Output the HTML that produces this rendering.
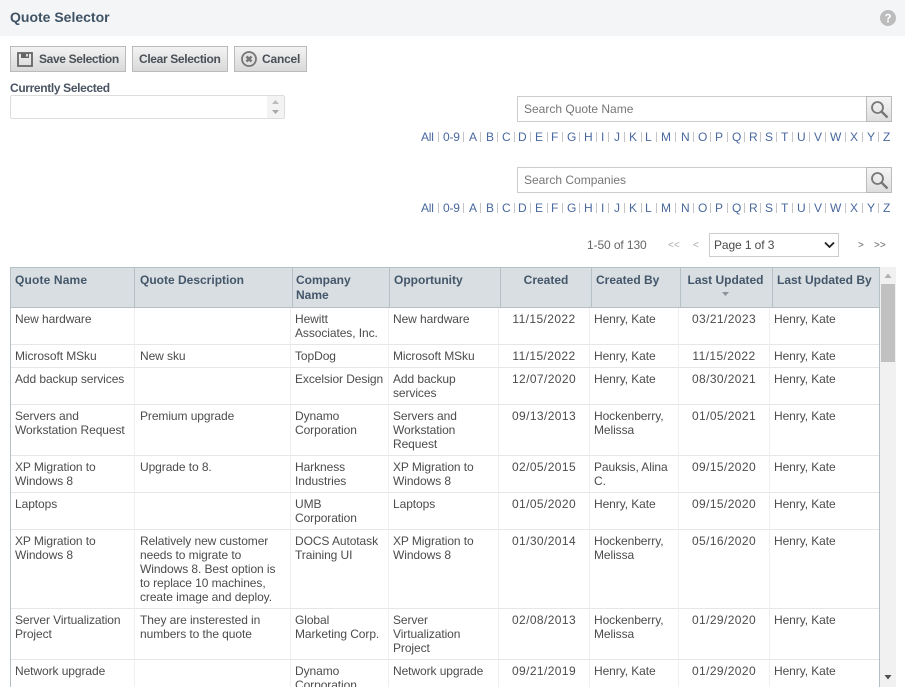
<!DOCTYPE html>
<html><head><meta charset="utf-8"><title>Quote Selector</title>
<style>
html,body{margin:0;padding:0;background:#fff}
body{width:905px;height:697px;overflow:hidden;position:relative;font-family:"Liberation Sans",sans-serif;font-size:12px;color:#4a4a4a}
.abs{position:absolute}
.btn{position:absolute;top:46px;height:24px;border:1px solid #bbb;background:linear-gradient(#f3f3f3,#d9d9d9);font-weight:bold;color:#4a5058;line-height:25px;white-space:nowrap;letter-spacing:-.35px}
.search{position:absolute;left:517px;width:349px;height:24px;border:1px solid #ccc;line-height:24px;color:#777;text-indent:6px;background:#fff}
.sbtn{position:absolute;left:866px;width:24px;height:24px;border:1px solid #bbb;background:linear-gradient(#f6f6f6,#dedede)}
.alpha{position:absolute;left:0;width:905px;height:14px}
.alpha a{position:absolute;top:0;color:#48689e;line-height:14px;letter-spacing:-.2px}
.alpha i{position:absolute;top:2px;width:1px;height:10px;background:#c4c4c4}
table{border-collapse:separate;border-spacing:0;table-layout:fixed;position:absolute;left:0;top:0}
td,th{padding:0;vertical-align:top;white-space:nowrap;text-align:left;overflow:hidden}
#wrap{position:absolute;left:10px;top:267px;width:868px;height:420px;overflow:hidden;border-left:1px solid #b5c0c5;border-right:1px solid #b5c0c5}
#head{width:868px;height:41px;background:#d8dee1;border-top:1px solid #b5c0c5;border-bottom:1px solid #b5c0c5;box-sizing:border-box}
#head th{height:39px;padding-top:5px;box-sizing:border-box;font-size:12px;line-height:15px;color:#44566a;border-right:1px solid #b5c0c5;font-weight:bold}
#head th:last-child{border-right:0}
#body{top:41px;width:868px}
#body td{box-sizing:border-box;padding-top:4px;line-height:14px;color:#4c4c4c;border-right:1px solid #efefef;border-bottom:1px solid #e4e6e7;letter-spacing:-.08px}
#body td:last-child{border-right:0}
.c{text-align:center!important}
#body td.c{letter-spacing:.4px}
</style></head><body>

<div class="abs" style="left:0;top:0;width:905px;height:36px;background:#f4f5f7"></div>
<div class="abs" style="left:10px;top:8px;font-size:14px;font-weight:bold;color:#3f5365;line-height:18px">Quote Selector</div>
<svg class="abs" style="left:880px;top:10px" width="16" height="16" viewBox="0 0 16 16"><circle cx="8" cy="8" r="8" fill="#bcbcbc"/><path d="M5.200 6.200C5.300 4.600 6.500 3.700 8 3.700c1.700 0 2.900 1 2.900 2.400 0 1.200-.7 1.700-1.500 2.300-.5.4-.7.7-.7 1.300H7.200c0-1.100.3-1.600 1-2.200.6-.5 1-.8 1-1.400 0-.6-.5-1-1.200-1-.7 0-1.200.4-1.300 1.100z" fill="#fff"/><rect x="7.100" y="10.500" width="1.800" height="1.800" fill="#fff"/></svg>

<div class="btn" style="left:10px;width:114px"><svg class="abs" style="left:6px;top:5px" width="16" height="15" viewBox="0 0 16 15"><path d="M1 1h14v13H1z" fill="none" stroke="#666" stroke-width="1.800"/><rect x="4" y="1" width="8" height="5" fill="#666"/><rect x="9" y="2" width="2" height="2.500" fill="#ddd"/></svg><span style="position:absolute;left:28px">Save Selection</span></div>
<div class="btn" style="left:132px;width:94px"><span style="position:absolute;left:6px">Clear Selection</span></div>
<div class="btn" style="left:234px;width:71px"><svg class="abs" style="left:6px;top:4px" width="16" height="16" viewBox="0 0 16 16"><circle cx="8" cy="8" r="7" fill="#e2e2e2" stroke="#777" stroke-width="1.800"/><path d="M5.500 5.500l5 5M10.500 5.500l-5 5" stroke="#777" stroke-width="2.600"/></svg><span style="position:absolute;left:27px;letter-spacing:-.2px">Cancel</span></div>

<div class="abs" style="left:10px;top:81px;font-weight:bold;color:#4a5462;line-height:15px;letter-spacing:-.35px">Currently Selected</div>
<div class="abs" style="left:10px;top:95px;width:273px;height:22px;border:1px solid #ddd;border-radius:2px;background:#fff"></div>
<div class="abs" style="left:267px;top:96px;width:17px;height:22px;background:#f3f3f3"></div>
<svg class="abs" style="left:272px;top:100px" width="7" height="15"><path d="M3.500 0L7 4H0z" fill="#bcbcbc"/><path d="M0 10h7l-3.500 4z" fill="#a8a8a8"/></svg>

<div class="search" style="top:96px">Search Quote Name</div>
<div class="sbtn" style="top:96px"><svg class="abs" style="left:3px;top:3px" width="19" height="19" viewBox="0 0 19 19"><circle cx="7.500" cy="7.500" r="5.500" fill="none" stroke="#777" stroke-width="1.800"/><path d="M11.500 11.500l6 6" stroke="#777" stroke-width="2.400"/></svg></div>

<div class="alpha" style="top:130px">
<a style="left:421px">All</a><i style="left:438px"></i><a style="left:443px">0-9</a><i style="left:463px"></i><a style="left:469px">A</a><i style="left:480px"></i><a style="left:486px">B</a><i style="left:497px"></i><a style="left:502px">C</a><i style="left:514px"></i><a style="left:518px">D</a><i style="left:530px"></i><a style="left:535px">E</a><i style="left:547px"></i><a style="left:551px">F</a><i style="left:562px"></i><a style="left:567px">G</a><i style="left:579px"></i><a style="left:584px">H</a><i style="left:596px"></i><a style="left:601px">I</a><i style="left:608px"></i><a style="left:614px">J</a><i style="left:624px"></i><a style="left:629px">K</a><i style="left:641px"></i><a style="left:645px">L</a><i style="left:656px"></i><a style="left:661px">M</a><i style="left:675px"></i><a style="left:681px">N</a><i style="left:693px"></i><a style="left:698px">O</a><i style="left:710px"></i><a style="left:715px">P</a><i style="left:727px"></i><a style="left:732px">Q</a><i style="left:744px"></i><a style="left:749px">R</a><i style="left:760px"></i><a style="left:765px">S</a><i style="left:776px"></i><a style="left:781px">T</a><i style="left:792px"></i><a style="left:797px">U</a><i style="left:809px"></i><a style="left:814px">V</a><i style="left:825px"></i><a style="left:830px">W</a><i style="left:845px"></i><a style="left:850px">X</a><i style="left:862px"></i><a style="left:867px">Y</a><i style="left:878px"></i><a style="left:883px">Z</a>
</div>

<div class="search" style="top:167px">Search Companies</div>
<div class="sbtn" style="top:167px"><svg class="abs" style="left:3px;top:3px" width="19" height="19" viewBox="0 0 19 19"><circle cx="7.500" cy="7.500" r="5.500" fill="none" stroke="#777" stroke-width="1.800"/><path d="M11.500 11.500l6 6" stroke="#777" stroke-width="2.400"/></svg></div>

<div class="alpha" style="top:201px">
<a style="left:421px">All</a><i style="left:438px"></i><a style="left:443px">0-9</a><i style="left:463px"></i><a style="left:469px">A</a><i style="left:480px"></i><a style="left:486px">B</a><i style="left:497px"></i><a style="left:502px">C</a><i style="left:514px"></i><a style="left:518px">D</a><i style="left:530px"></i><a style="left:535px">E</a><i style="left:547px"></i><a style="left:551px">F</a><i style="left:562px"></i><a style="left:567px">G</a><i style="left:579px"></i><a style="left:584px">H</a><i style="left:596px"></i><a style="left:601px">I</a><i style="left:608px"></i><a style="left:614px">J</a><i style="left:624px"></i><a style="left:629px">K</a><i style="left:641px"></i><a style="left:645px">L</a><i style="left:656px"></i><a style="left:661px">M</a><i style="left:675px"></i><a style="left:681px">N</a><i style="left:693px"></i><a style="left:698px">O</a><i style="left:710px"></i><a style="left:715px">P</a><i style="left:727px"></i><a style="left:732px">Q</a><i style="left:744px"></i><a style="left:749px">R</a><i style="left:760px"></i><a style="left:765px">S</a><i style="left:776px"></i><a style="left:781px">T</a><i style="left:792px"></i><a style="left:797px">U</a><i style="left:809px"></i><a style="left:814px">V</a><i style="left:825px"></i><a style="left:830px">W</a><i style="left:845px"></i><a style="left:850px">X</a><i style="left:862px"></i><a style="left:867px">Y</a><i style="left:878px"></i><a style="left:883px">Z</a>
</div>

<div class="abs" style="left:587px;top:238px;line-height:15px;color:#666;letter-spacing:-.1px">1-50 of 130</div>
<div class="abs" style="left:668px;top:238px;line-height:15px;color:#aaa;font-size:10px">&lt;&lt;</div>
<div class="abs" style="left:693px;top:238px;line-height:15px;color:#aaa;font-size:10px">&lt;</div>
<div class="abs" style="left:709px;top:233px;width:128px;height:22px;border:1px solid #ccc;background:#fff;line-height:23px;text-indent:4px;color:#4a4a4a;letter-spacing:-.1px">Page 1 of 3</div>
<svg class="abs" style="left:824px;top:241px" width="11" height="8"><path d="M1 1.500l4.500 4.500L10 1.500" fill="none" stroke="#222" stroke-width="1.800"/></svg>
<div class="abs" style="left:858px;top:238px;line-height:15px;color:#666;font-size:10px">&gt;</div>
<div class="abs" style="left:874px;top:238px;line-height:15px;color:#666;font-size:10px">&gt;&gt;</div>

<div id="wrap">
<table id="head"><colgroup><col style="width:124px"><col style="width:158px"><col style="width:97px"><col style="width:111px"><col style="width:91px"><col style="width:89px"><col style="width:92px"><col style="width:106px"></colgroup>
<tr>
<th style="padding-left:4px;letter-spacing:.15px">Quote Name</th>
<th style="padding-left:5px">Quote Description</th>
<th style="padding-left:3px">Company<br>Name</th>
<th style="padding-left:4px">Opportunity</th>
<th class="c">Created</th>
<th style="padding-left:4px">Created By</th>
<th class="c" style="padding-right:2px">Last Updated</th>
<th style="padding-left:4px">Last Updated By</th>
</tr></table>
<svg class="abs" style="left:711px;top:25px" width="8" height="5"><path d="M0 0h7L3.500 4z" fill="#8a9298"/></svg>

<table id="body"><colgroup><col style="width:124px"><col style="width:156px"><col style="width:98px"><col style="width:110px"><col style="width:91px"><col style="width:89px"><col style="width:91px"><col style="width:109px"></colgroup>
<tr style="height:37px"><td style="padding-left:4px">New hardware</td><td style="padding-left:5px"></td><td style="padding-left:4px">Hewitt<br>Associates, Inc.</td><td style="padding-left:4px">New hardware</td><td class="c">11/15/2022</td><td style="padding-left:4px">Henry, Kate</td><td class="c">03/21/2023</td><td style="padding-left:4px">Henry, Kate</td></tr>
<tr style="height:23px"><td style="padding-left:4px">Microsoft MSku</td><td style="padding-left:5px">New sku</td><td style="padding-left:4px">TopDog</td><td style="padding-left:4px">Microsoft MSku</td><td class="c">11/15/2022</td><td style="padding-left:4px">Henry, Kate</td><td class="c">11/15/2022</td><td style="padding-left:4px">Henry, Kate</td></tr>
<tr style="height:37px"><td style="padding-left:4px">Add backup services</td><td style="padding-left:5px"></td><td style="padding-left:4px">Excelsior Design</td><td style="padding-left:4px">Add backup<br>services</td><td class="c">12/07/2020</td><td style="padding-left:4px">Henry, Kate</td><td class="c">08/30/2021</td><td style="padding-left:4px">Henry, Kate</td></tr>
<tr style="height:51px"><td style="padding-left:4px">Servers and<br>Workstation Request</td><td style="padding-left:5px">Premium upgrade</td><td style="padding-left:4px">Dynamo<br>Corporation</td><td style="padding-left:4px">Servers and<br>Workstation<br>Request</td><td class="c">09/13/2013</td><td style="padding-left:4px">Hockenberry,<br>Melissa</td><td class="c">01/05/2021</td><td style="padding-left:4px">Henry, Kate</td></tr>
<tr style="height:37px"><td style="padding-left:4px">XP Migration to<br>Windows 8</td><td style="padding-left:5px">Upgrade to 8.</td><td style="padding-left:4px">Harkness<br>Industries</td><td style="padding-left:4px">XP Migration to<br>Windows 8</td><td class="c">02/05/2015</td><td style="padding-left:4px">Pauksis, Alina<br>C.</td><td class="c">09/15/2020</td><td style="padding-left:4px">Henry, Kate</td></tr>
<tr style="height:37px"><td style="padding-left:4px">Laptops</td><td style="padding-left:5px"></td><td style="padding-left:4px">UMB<br>Corporation</td><td style="padding-left:4px">Laptops</td><td class="c">01/05/2020</td><td style="padding-left:4px">Henry, Kate</td><td class="c">09/15/2020</td><td style="padding-left:4px">Henry, Kate</td></tr>
<tr style="height:79px"><td style="padding-left:4px">XP Migration to<br>Windows 8</td><td style="padding-left:5px">Relatively new customer<br>needs to migrate to<br>Windows 8. Best option is<br>to replace 10 machines,<br>create image and deploy.</td><td style="padding-left:4px">DOCS Autotask<br>Training UI</td><td style="padding-left:4px">XP Migration to<br>Windows 8</td><td class="c">01/30/2014</td><td style="padding-left:4px">Hockenberry,<br>Melissa</td><td class="c">05/16/2020</td><td style="padding-left:4px">Henry, Kate</td></tr>
<tr style="height:51px"><td style="padding-left:4px">Server Virtualization<br>Project</td><td style="padding-left:5px">They are insterested in<br>numbers to the quote</td><td style="padding-left:4px">Global<br>Marketing Corp.</td><td style="padding-left:4px">Server<br>Virtualization<br>Project</td><td class="c">02/08/2013</td><td style="padding-left:4px">Hockenberry,<br>Melissa</td><td class="c">01/29/2020</td><td style="padding-left:4px">Henry, Kate</td></tr>
<tr style="height:51px"><td style="padding-left:4px">Network upgrade</td><td style="padding-left:5px"></td><td style="padding-left:4px">Dynamo<br>Corporation</td><td style="padding-left:4px">Network upgrade</td><td class="c">09/21/2019</td><td style="padding-left:4px">Henry, Kate</td><td class="c">01/29/2020</td><td style="padding-left:4px">Henry, Kate</td></tr>
</table>
</div>

<div class="abs" style="left:880px;top:267px;width:16px;height:420px;background:#f1f1f1"></div>
<div class="abs" style="left:881px;top:284px;width:14px;height:78px;background:#c1c1c1"></div>
<svg class="abs" style="left:880px;top:267px" width="16" height="420"><path d="M4.500 11L8 6.500 11.500 11z" fill="#b0b0b0"/><path d="M4.500 408h7L8 412.500z" fill="#505050"/></svg>
</body></html>
